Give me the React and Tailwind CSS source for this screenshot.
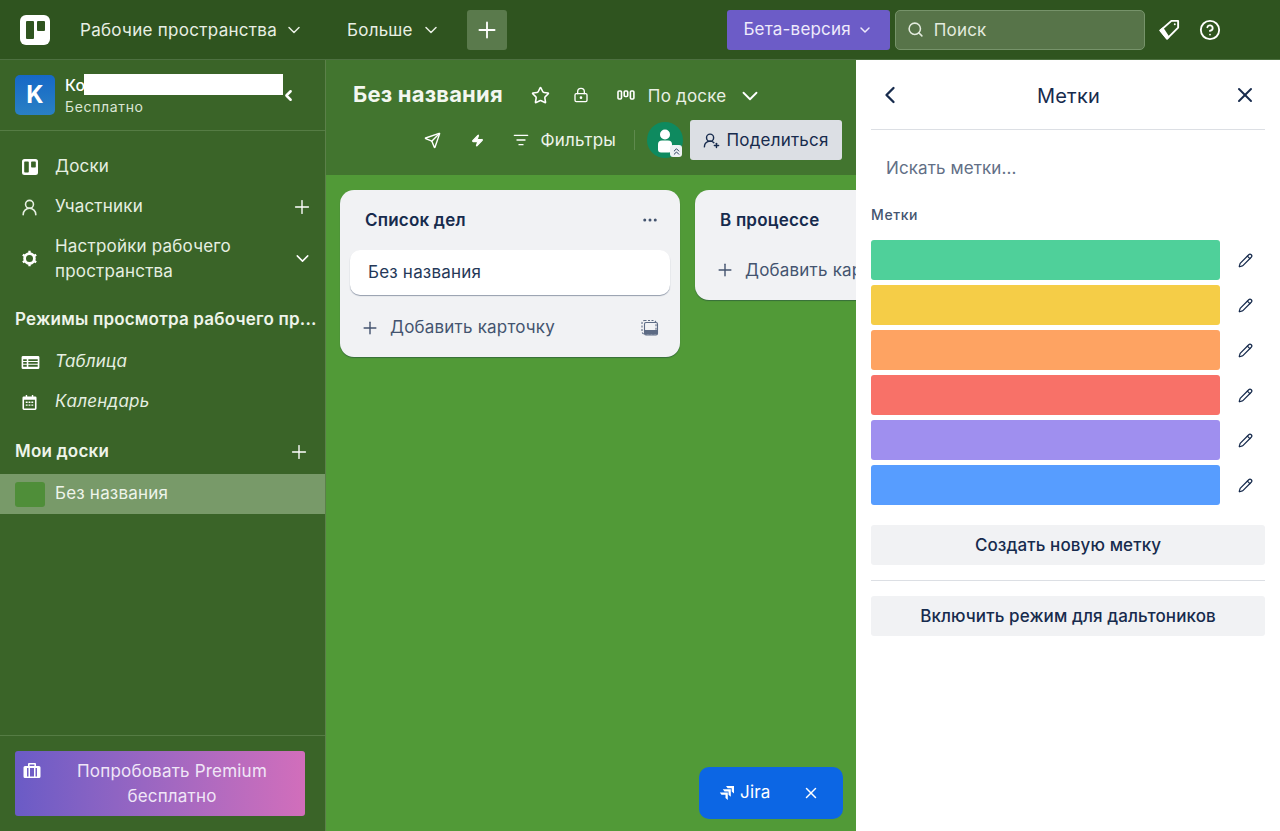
import { ChevronDown, ChevronLeft, Plus, X, Search, Star, LockKeyhole, UserRoundPlus, HelpCircle, Pencil, Send, Zap, Ellipsis, UserRound, ListFilter, ChevronsUp } from "lucide-react";

const labelColors = ["bg-[#4fd09a]", "bg-[#f5cd47]", "bg-[#fea362]", "bg-[#f87168]", "bg-[#9f8fef]", "bg-[#579dff]"];

function BoardsIcon({ className }) {
  return (
    <svg viewBox="0 0 16 16" className={className} fill="currentColor">
      <path fillRule="evenodd" d="M2.500 0h11A2.500 2.500 0 0 1 16 2.500v11a2.500 2.500 0 0 1-2.500 2.500h-11A2.500 2.500 0 0 1 0 13.500v-11A2.500 2.500 0 0 1 2.500 0ZM3 2.500a.8.800 0 0 0-.8.800v9.400a.8.800 0 0 0 .8.800h3a.8.800 0 0 0 .8-.8V3.300a.8.800 0 0 0-.8-.8H3Zm6.900 0a.8.800 0 0 0-.8.800v4.400a.8.800 0 0 0 .8.800H13a.8.800 0 0 0 .8-.8V3.300a.8.800 0 0 0-.8-.8H9.900Z" />
    </svg>
  );
}

function GearIcon() {
  return (
    <svg viewBox="0 0 16 16" className="w-[17px] h-[17px] text-white" fill="none" stroke="currentColor">
      <circle cx="8" cy="8" r="4.600" strokeWidth="2.600" />
      <path d="M8 .8v2M8 13.200v2M1.700 4.400l1.700 1M12.600 10.600l1.700 1M1.700 11.600l1.700-1M12.600 5.400l1.700-1" strokeWidth="2.200" />
    </svg>
  );
}

function TableIcon() {
  return (
    <svg viewBox="0 0 20 16" className="w-[19px] h-[15px] text-white" fill="currentColor">
      <path fillRule="evenodd" d="M2 1h16a1.500 1.500 0 0 1 1.500 1.500v11A1.500 1.500 0 0 1 18 15H2a1.500 1.500 0 0 1-1.500-1.500v-11A1.500 1.500 0 0 1 2 1Zm.2 3.500v1.800h3.800V4.500H2.200Zm5.500 0v1.800h10V4.500h-10ZM2.200 7.500v1.800h3.800V7.500H2.200Zm5.500 0v1.800h10V7.500h-10ZM2.200 10.500v2h3.800v-2H2.200Zm5.500 0v2h10v-2h-10Z" />
    </svg>
  );
}

function CalendarIcon() {
  return (
    <svg viewBox="0 0 16 16" className="w-[15px] h-[15px] text-white ml-[1px]" fill="currentColor">
      <path fillRule="evenodd" d="M4 0h1.500v1.500h5V0H12v1.500h2A1.500 1.500 0 0 1 15.500 3v11.500A1.500 1.500 0 0 1 14 16H2a1.500 1.500 0 0 1-1.500-1.500V3A1.500 1.500 0 0 1 2 1.500h2V0ZM2.200 5v9.300h11.600V5H2.200Z" />
      <path d="M4 7h2v1.500H4ZM7 7h2v1.500H7ZM10 7h2v1.500h-2ZM4 10h2v1.500H4ZM7 10h2v1.500H7ZM10 10h2v1.500h-2Z" />
    </svg>
  );
}

function TagIcon() {
  return (
    <svg viewBox="0 0 24 24" className="w-[23px] h-[23px] ml-[13px] text-white" fill="none" stroke="currentColor" strokeWidth="2" strokeLinejoin="round">
      <path d="M14 3h7v7L9.500 21.500 2.500 13Z" />
      <path d="M2.500 13 9.500 21.500 11 20 5 11Z" fill="currentColor" />
      <circle cx="17.500" cy="6.500" r="1" fill="currentColor" stroke="none" />
    </svg>
  );
}

function PremiumIcon() {
  return (
    <svg viewBox="0 0 18 16" className="absolute left-[8px] top-[12px] w-[18px] h-[16px] text-white" fill="currentColor">
      <path fillRule="evenodd" d="M6 0h6a1 1 0 0 1 1 1v2h3a1.500 1.500 0 0 1 1.500 1.500v9A1.500 1.500 0 0 1 16 15H2a1.500 1.500 0 0 1-1.500-1.500v-9A1.500 1.500 0 0 1 2 3h3V1a1 1 0 0 1 1-1Zm.6 1.500V3h4.800V1.500H6.600ZM4 5v8.500h1.500V5H4Zm3 0v8.500h4V5H7Zm5.500 0v8.500H14V5h-1.500Z" />
    </svg>
  );
}

function CardTemplateIcon() {
  return (
    <svg viewBox="0 0 18 18" className="w-[18px] h-[18px] text-[#5d6b84]" fill="none" stroke="currentColor" strokeWidth="1.100">
      <rect x="1" y="1.500" width="14" height="13.500" rx="2.500" strokeDasharray="2 1.500" />
      <rect x="3.500" y="3.500" width="13" height="12.500" rx="1.500" />
      <rect x="4" y="11" width="12" height="4.500" fill="currentColor" stroke="none" />
    </svg>
  );
}

function JiraIcon() {
  return (
    <svg viewBox="0 0 16 16" className="w-4 h-4" fill="currentColor">
      <path d="M7 1h8v7.500l-2.300-2V3.200H8.700Z" />
      <path d="M3.800 4.300h8v7.500l-2.300-2V6.500H5.500Z" />
      <path d="M.8 7.600h8v7.500l-2.300-2V9.800H2.500Z" />
    </svg>
  );
}

function NavRow({ icon, children, right, className = "" }) {
  return (
    <div className={`flex items-center pl-[21px] pr-[14px] text-[#e6efe2] ${className}`}>
      <span className="w-[34px] shrink-0 flex items-center">{icon}</span>
      <span className="flex-1 min-w-0">{children}</span>
      {right}
    </div>
  );
}

function Sidebar() {
  return (
    <aside className="w-[326px] shrink-0 bg-[#3a6428] border-r border-[#5b8049] flex flex-col relative">
      <div className="h-[71px] shrink-0 border-b border-[#557c44] flex items-center pl-[15px] pr-[30px] relative">
        <div className="w-10 h-10 rounded-[5px] bg-gradient-to-b from-[#1668c7] to-[#2a80c4] text-white font-bold text-[24px] flex items-center justify-center">K</div>
        <div className="ml-[10px] flex-1 min-w-0">
          <div className="text-[16px] leading-[22px] font-medium text-white">Ко</div>
          <div className="text-[14px] leading-[20px] pt-[1px] tracking-[0.65px] text-[#dbe6d5]">Бесплатно</div>
        </div>
        <ChevronLeft size={17} strokeWidth={3.500} className="text-white -mr-[2px]" />
        <div className="absolute left-[84px] top-[14px] w-[199px] h-[21px] bg-white"></div>
      </div>

      <div className="flex-1 flex flex-col pt-[16px]">
        <NavRow className="h-10" icon={<BoardsIcon className="w-[16px] h-[16px] text-white ml-[1px]" />}>Доски</NavRow>
        <NavRow className="h-10" icon={<UserRound size={19} className="-ml-[1px]" />} right={<Plus size={22} strokeWidth={1.500} className="text-white -mr-[2px]" />}>Участники</NavRow>
        <NavRow className="h-[65px] -mt-[1px] leading-[25px]" icon={<GearIcon />} right={<ChevronDown size={21} strokeWidth={1.700} className="text-white -mr-[2px]" />}>
          Настройки рабочего пространства
        </NavRow>

        <div className="h-[30px] mt-[14px] pl-[15px] pr-[10px] flex items-center font-semibold text-[#eef4ea] whitespace-nowrap overflow-hidden">Режимы просмотра рабочего пр...</div>
        <NavRow className="h-10 mt-[7px] italic" icon={<TableIcon />}>Таблица</NavRow>
        <NavRow className="h-10 italic" icon={<CalendarIcon />}>Календарь</NavRow>

        <div className="h-10 mt-[10px] pl-[15px] pr-[15px] flex items-center justify-between font-semibold text-[#eef4ea]">
          Мои доски
          <Plus size={22} strokeWidth={1.500} className="text-white" />
        </div>
        <div className="h-10 mt-[2px] bg-[#789a69] flex items-center pl-[15px] text-[#eef4ea]">
          <span className="w-[30px] h-[25px] rounded-[3px] bg-[#4f8e39]"></span>
          <span className="ml-[10px]">Без названия</span>
        </div>
      </div>

      <div className="h-[96px] shrink-0 border-t border-[#557c44] pt-[15px] pl-[15px]">
        <div className="relative w-[290px] h-[65px] rounded-[3px] bg-gradient-to-r from-[#6a5bc6] to-[#d26ebb] text-[#f0e6f7] text-center leading-[25px] pt-[8px] pl-[40px] pr-[16px]">
          <PremiumIcon />
          Попробовать Premium бесплатно
        </div>
      </div>
    </aside>
  );
}

function CardList({ title, children, className = "" }) {
  return (
    <div className={`w-[340px] shrink-0 rounded-[14px] bg-[#f1f2f4] shadow-[0_1px_1px_rgba(9,30,66,0.35)] ${className}`}>
      <div className="h-[60px] pl-[25px] pr-[21px] flex items-center justify-between">
        <span className="font-semibold text-[#172b4d] pt-[2px]">{title}</span>
        <Ellipsis size={18} className="text-[#44546f]" />
      </div>
      {children}
    </div>
  );
}

function Board() {
  return (
    <main className="flex-1 min-w-0 flex flex-col relative overflow-hidden">
      <div className="h-[115px] shrink-0 bg-[#42752f] pl-[27px] text-white">
        <div className="h-[70px] flex items-center">
          <h1 className="text-[22px] font-bold whitespace-nowrap text-[#f3f7f0] mr-[28px] -mt-[1px]">Без названия</h1>
          <Star size={19} className="mr-[23px]" />
          <LockKeyhole size={16} className="mr-[28px]" />
          <svg viewBox="0 0 18 10" className="w-[18px] h-[10px] mr-[13px]" fill="none" stroke="currentColor" strokeWidth="1.600">
            <rect x="1" y="1" width="3.500" height="8" rx="1" />
            <rect x="7.200" y="1" width="3.500" height="5.500" rx="1" />
            <rect x="13.400" y="1" width="3.500" height="8" rx="1" />
          </svg>
          <span className="whitespace-nowrap text-[#e9f0e5] pt-[3px]">По доске</span>
          <ChevronDown size={26} strokeWidth={1.700} className="ml-[11px] mt-[1px]" />
        </div>
        <div className="h-10 flex items-center justify-end w-[489px] -mt-[10px]">
          <Send size={17} className="mr-[30px]" />
          <Zap size={13} fill="currentColor" className="mr-[29px]" />
          <ListFilter size={16} className="mr-[11px]" />
          <span className="mr-[18px] text-[#eef4ea] pt-[2px]">Фильтры</span>
          <span className="w-px h-5 bg-[#5f8a4e] mr-[12px]"></span>
          <span className="relative w-[36px] h-[36px] rounded-full bg-[#0e8a5f] mr-[7px] flex items-center justify-center overflow-visible">
            <svg viewBox="0 0 20 24" className="w-[20px] h-[27px]" fill="white">
              <circle cx="10" cy="6" r="5" />
              <path d="M3 16a4 4 0 0 1 4-4h6a4 4 0 0 1 4 4v5a3 3 0 0 1-3 3H6a3 3 0 0 1-3-3Z" />
            </svg>
            <span className="absolute right-[1px] bottom-[1px] w-[12px] h-[12px] rounded-[3px] bg-[#eef1f4] flex items-center justify-center text-[#172b4d]">
              <ChevronsUp size={11} strokeWidth={2} />
            </span>
          </span>
          <button className="h-10 w-[152px] shrink-0 rounded-[3px] bg-[#dcdfe4] text-[#172b4d] flex items-center justify-center gap-[6px] whitespace-nowrap">
            <UserRoundPlus size={17} />
            <span className="pt-[1px]">Поделиться</span>
          </button>
        </div>
      </div>

      <div className="flex-1 bg-[#519a37] flex items-start gap-[15px] pl-[14px] pt-[15px]">
        <CardList title="Список дел">
          <div className="mx-[10px] h-[45px] pt-[1px] rounded-[10px] bg-white shadow-[0_1px_1px_rgba(9,30,66,0.4)] flex items-center px-[18px] text-[#253858]">Без названия</div>
          <div className="h-[62px] pl-[20px] pr-[21px] flex items-center text-[#44546f] pt-[3px]">
            <Plus size={20} strokeWidth={1.700} className="mr-[10px]" />
            <span className="flex-1">Добавить карточку</span>
            <CardTemplateIcon />
          </div>
        </CardList>
        <CardList title="В процессе">
          <div className="h-[50px] pl-[20px] flex items-start pt-[8px] text-[#44546f] whitespace-nowrap">
            <Plus size={20} strokeWidth={1.700} className="mr-[10px] mt-[2px]" />
            Добавить карточку
          </div>
        </CardList>
      </div>

      <div className="absolute left-[373px] bottom-[12px] w-[144px] h-[52px] rounded-[10px] bg-[#0c66e4] text-white flex items-center pl-[20px]">
        <JiraIcon />
        <span className="ml-[5px] flex-1">Jira</span>
        <X size={18} className="mr-[23px]" />
      </div>
    </main>
  );
}

function LabelsPanel() {
  return (
    <section className="absolute right-0 top-[60px] bottom-0 w-[424px] bg-white px-[15px] text-[#172b4d]">
      <div className="h-[70px] border-b border-[#dcdfe4] flex items-center justify-between pl-[5px] pr-[8px]">
        <ChevronLeft size={28} strokeWidth={2} />
        <h2 className="text-[20px] font-normal pt-[3px]">Метки</h2>
        <X size={24} strokeWidth={2} />
      </div>
      <div className="h-[74px] flex items-center pl-[15px] pt-[3px] text-[#626f86] text-[17px] tracking-[0.1px]">Искать метки...</div>
      <div className="h-[21px] text-[14px] font-medium tracking-[0.6px] text-[#44546f]">Метки</div>
      <div className="mt-[15px] flex flex-col gap-[5px]">
        {labelColors.map((color) => (
          <div key={color} className="flex items-center">
            <div className={`w-[349px] h-10 rounded-[3px] ${color}`}></div>
            <Pencil size={15} strokeWidth={2} className="ml-[18px]" />
          </div>
        ))}
      </div>
      <button className="block mt-5 w-full h-10 pt-[1px] rounded-[3px] bg-[#f1f2f4] text-[17px] font-medium tracking-[0.1px]">Создать новую метку</button>
      <div className="mt-[15px] border-t border-[#dcdfe4]"></div>
      <button className="block mt-[15px] w-full h-10 pt-[1px] rounded-[3px] bg-[#f1f2f4] text-[17px] font-medium tracking-[0.1px]">Включить режим для дальтоников</button>
    </section>
  );
}

export default function App() {
  return (
    <div className="h-[831px] w-[1280px] overflow-hidden flex flex-col relative font-['Inter',sans-serif] text-[17px] tracking-[0.2px]">
      <header className="h-[60px] shrink-0 bg-[#2f541f] border-b border-[#4d7040] flex items-center pl-5 text-[#e8efe4]">
        <div className="w-[30px] h-[30px] rounded-[6px] bg-white flex items-center justify-center text-[#2f541f]">
          <svg viewBox="0 0 30 30" className="w-[30px] h-[30px]" fill="currentColor">
            <rect x="6" y="6" width="8" height="18" rx="1" />
            <rect x="17" y="6" width="8" height="10" rx="1" />
          </svg>
        </div>
        <span className="ml-[30px] pt-[2px] tracking-[0.3px]">Рабочие пространства</span>
        <ChevronDown size={20} strokeWidth={1.800} className="ml-[7px]" />
        <span className="ml-[43px] pt-[2px]">Больше</span>
        <ChevronDown size={20} strokeWidth={1.800} className="ml-[8px]" />
        <button className="ml-[26px] w-10 h-10 rounded-[3px] bg-[#5a7a4c] flex items-center justify-center text-white">
          <Plus size={26} strokeWidth={1.700} />
        </button>
        <button className="ml-[220px] h-10 w-[163px] pt-[1px] rounded-[3px] bg-[#6c5cc7] text-[#eeeafb] flex items-center justify-center gap-[6px]">
          Бета-версия
          <ChevronDown size={16} strokeWidth={2.200} />
        </button>
        <div className="ml-[5px] h-10 w-[250px] rounded-[5px] border border-[#76936a] bg-[#577449] flex items-center pl-[11px] text-[#e3ebde]">
          <Search size={17} strokeWidth={2.200} />
          <span className="ml-[10px] pt-[2px]">Поиск</span>
        </div>
        <TagIcon />
        <HelpCircle size={22} strokeWidth={2} className="ml-[18px] text-white" />
      </header>
      <div className="flex-1 min-h-0 flex">
        <Sidebar />
        <Board />
      </div>
      <LabelsPanel />
    </div>
  );
}
